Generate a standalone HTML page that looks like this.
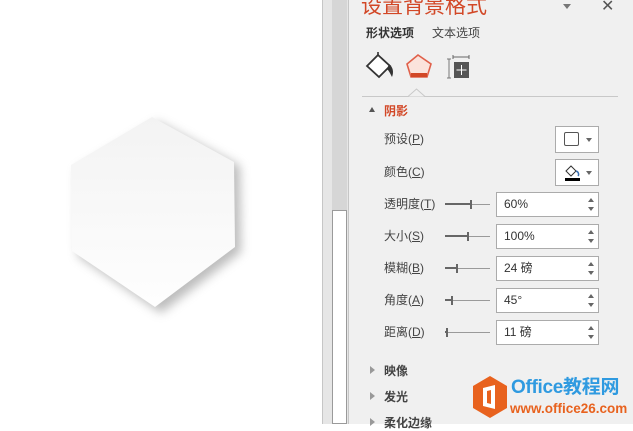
<!DOCTYPE html><html><head><meta charset="utf-8"><style>
*{margin:0;padding:0;box-sizing:border-box}
body{width:633px;height:424px;overflow:hidden;background:#fff;position:relative;font-family:"Liberation Sans","Noto Sans CJK SC",sans-serif;font-size:12px;color:#444}
.a{position:absolute}
.lbl{position:absolute;left:384px;font-size:12px;color:#444;line-height:14px}
.box{position:absolute;left:496px;width:103px;height:25px;background:#fff;border:1px solid #ababab;padding-left:7px;line-height:23px;font-size:12px;color:#333}
.sp{position:absolute;right:4px;width:0;height:0;border-left:3.5px solid transparent;border-right:3.5px solid transparent}
.up{top:5px;border-bottom:4px solid #666}.dn{bottom:5px;border-top:4px solid #666}
.sl{position:absolute;left:445px;width:45px;height:1px;background:#9a9a9a}
.slf{position:absolute;left:0;top:-1px;height:2px;background:#666}
.th{position:absolute;top:-4px;width:2px;height:9px;background:#666}
.sec{position:absolute;left:384px;font-weight:bold;color:#444;font-size:12px}
.tri{position:absolute;left:370px;width:0;height:0;border-top:4px solid transparent;border-bottom:4px solid transparent;border-left:5px solid #999}
</style></head><body>
<svg class="a" style="left:0;top:0" width="322" height="424">
<defs><filter id="f" x="-30%" y="-30%" width="160%" height="160%"><feGaussianBlur stdDeviation="5"/></filter>
<linearGradient id="g" x1="0" y1="0" x2="0" y2="1"><stop offset="0" stop-color="#f3f3f3"/><stop offset="1" stop-color="#fefefe"/></linearGradient></defs>
<polygon points="158,122 240,166 241,252 161,313 78,256 77,170" fill="#9a9a9a" opacity=".65" filter="url(#f)"/>
<polygon points="152,117 234,162 235,247 155,307 72,251 71,165" fill="url(#g)"/>
</svg>
<div class="a" style="left:322px;top:0;width:1px;height:424px;background:#c6c6c6"></div>
<div class="a" style="left:323px;top:0;width:25px;height:424px;background:#e6e6e6"></div>
<div class="a" style="left:332px;top:0;width:15px;height:211px;background:#d6d6d6"></div>
<div class="a" style="left:332px;top:210px;width:15px;height:214px;background:#fff;border:1px solid #9a9a9a"></div>
<div class="a" style="left:348px;top:0;width:1px;height:424px;background:#c6c6c6"></div>
<div class="a" style="left:349px;top:0;width:284px;height:424px;background:#f0f0f0"></div>
<div class="a" style="left:361px;top:-6px;font-size:21px;color:#d24726;line-height:26px">设置背景格式</div>
<div class="a" style="left:563px;top:4px;width:0;height:0;border-left:4px solid transparent;border-right:4px solid transparent;border-top:5px solid #777"></div>
<div class="a" style="left:601px;top:-4px;font-size:16px;color:#555">✕</div>
<div class="a" style="left:366px;top:24px;font-weight:bold;color:#333">形状选项</div>
<div class="a" style="left:432px;top:24px;color:#444">文本选项</div>
<svg class="a" style="left:362px;top:50px" width="120" height="34">
<path d="M5 16 L16 5 L28 16 L17 27 Z" fill="#fff" stroke="#333" stroke-width="1.8"/>
<path d="M16 5 L16 2" stroke="#333" stroke-width="1.6"/>
<path d="M27 14 C31 17 32 22 30 27 C28 23 27 21 25 19 Z" fill="#333"/>
<path d="M56 5 L69 14 L65 27 L49 27 L45 14 Z" fill="#fbe3dc" stroke="#e0604a" stroke-width="1.6"/>
<rect x="49" y="23" width="16" height="4" fill="#d24726"/>
<g transform="translate(11,0)">
<path d="M74 9 L78 9 M74 28 L78 28 M76 9 V28" stroke="#777" stroke-width="1"/>
<path d="M80 7 H96 M80 5 V9 M96 5 V9" stroke="#666" stroke-width="1"/>
<rect x="81" y="12" width="15" height="16" fill="#555"/>
<path d="M88.5 15 V25 M83.5 20 H93.5" stroke="#fff" stroke-width="1"/>
</g>
</svg>
<div class="a" style="left:362px;top:96px;width:256px;height:1px;background:#c8c8c8"></div>
<svg class="a" style="left:408px;top:88px" width="18" height="10"><path d="M0 8.5 L8.5 1 L17 8.5" fill="#f0f0f0" stroke="#c8c8c8"/></svg>
<div class="a" style="left:369px;top:107px;width:0;height:0;border-left:3px solid transparent;border-right:3px solid transparent;border-bottom:5px solid #555"></div>
<div class="a" style="left:384px;top:102px;font-weight:bold;color:#d24726">阴影</div>
<div class="lbl" style="top:132px">预设(<u>P</u>)</div>
<div class="lbl" style="top:165px">颜色(<u>C</u>)</div>
<div class="lbl" style="top:197px">透明度(<u>T</u>)</div>
<div class="lbl" style="top:229px">大小(<u>S</u>)</div>
<div class="lbl" style="top:261px">模糊(<u>B</u>)</div>
<div class="lbl" style="top:293px">角度(<u>A</u>)</div>
<div class="lbl" style="top:325px">距离(<u>D</u>)</div>
<div class="a" style="left:555px;top:126px;width:44px;height:27px;background:#fff;border:1px solid #ababab">
<div class="a" style="left:8px;top:5px;width:15px;height:14px;border:1px solid #555;border-radius:2px"></div>
<div class="a" style="left:30px;top:11px;border-left:3.5px solid transparent;border-right:3.5px solid transparent;border-top:4px solid #666"></div></div>
<div class="a" style="left:555px;top:159px;width:44px;height:27px;background:#fff;border:1px solid #ababab">
<svg class="a" style="left:8px;top:3px" width="18" height="18"><path d="M2 8 L7 3 L12 8 L7 13 Z" fill="#fff" stroke="#333"/><path d="M12 8 C15 9 15 12 14 13" stroke="#3a6fb0" stroke-width="1.5" fill="none"/><rect x="1" y="15" width="15" height="3" fill="#000"/></svg>
<div class="a" style="left:30px;top:11px;border-left:3.5px solid transparent;border-right:3.5px solid transparent;border-top:4px solid #666"></div></div>
<div class="sl" style="top:204px"><div class="slf" style="width:26px"></div><div class="th" style="left:25px"></div></div>
<div class="sl" style="top:236px"><div class="slf" style="width:23px"></div><div class="th" style="left:22px"></div></div>
<div class="sl" style="top:268px"><div class="slf" style="width:12px"></div><div class="th" style="left:11px"></div></div>
<div class="sl" style="top:300px"><div class="slf" style="width:7px"></div><div class="th" style="left:6px"></div></div>
<div class="sl" style="top:332px"><div class="slf" style="width:2px"></div><div class="th" style="left:1px"></div></div>
<div class="box" style="top:192px">60%<i class="sp up"></i><i class="sp dn"></i></div>
<div class="box" style="top:224px">100%<i class="sp up"></i><i class="sp dn"></i></div>
<div class="box" style="top:256px">24 磅<i class="sp up"></i><i class="sp dn"></i></div>
<div class="box" style="top:288px">45°<i class="sp up"></i><i class="sp dn"></i></div>
<div class="box" style="top:320px">11 磅<i class="sp up"></i><i class="sp dn"></i></div>
<div class="tri" style="top:366px"></div><div class="sec" style="top:362px">映像</div>
<div class="tri" style="top:392px"></div><div class="sec" style="top:388px">发光</div>
<div class="tri" style="top:418px"></div><div class="sec" style="top:414px">柔化边缘</div>
<svg class="a" style="left:470px;top:374px" width="40" height="46"><path d="M20 2 L37 12 L37 34 L20 44 L3 34 L3 12 Z" fill="#e8621e"/><path d="M13 14 L25 11 L25 35 L13 32 Z M17 17 V29 L21 30 V16 Z" fill="#fff" fill-rule="evenodd"/></svg>
<div class="a" style="left:511px;top:376px;font-size:19px;font-weight:bold;color:#2f9ae0;line-height:24px;letter-spacing:-0.3px">Office教程网</div>
<div class="a" style="left:510px;top:400px;font-size:13.5px;font-weight:bold;color:#e8621e;line-height:18px">www.office26.com</div>
</body></html>
